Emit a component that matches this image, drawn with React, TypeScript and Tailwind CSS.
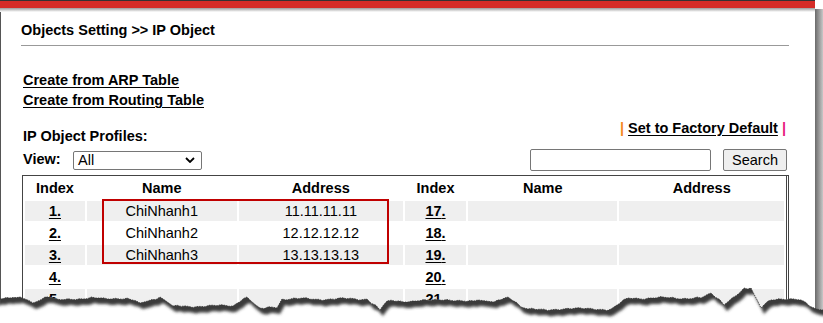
const leftRows = [
  { idx: 1, name: "ChiNhanh1", addr: "11.11.11.11" },
  { idx: 2, name: "ChiNhanh2", addr: "12.12.12.12" },
  { idx: 3, name: "ChiNhanh3", addr: "13.13.13.13" },
  { idx: 4, name: "", addr: "" },
  { idx: 5, name: "", addr: "" },
];

// rough outline of the torn bottom edge
const edgePoints: [number, number][] = [
  [-5, 300], [10, 298], [20, 297], [33, 303], [45, 297], [50, 297], [57, 299], [83, 299],
  [100, 298], [127, 298], [140, 303], [160, 297], [173, 306], [233, 306], [247, 297],
  [260, 308], [277, 308], [282, 299], [367, 299], [380, 310], [387, 301], [412, 301],
  [478, 300], [494, 302], [508, 297], [521, 307], [528, 309], [611, 309], [628, 298],
  [701, 298], [711, 293], [724, 305], [744, 288], [751, 288], [761, 308], [771, 300],
  [801, 300], [814, 308], [830, 310],
];

function roughen(pts: [number, number][]) {
  const out: [number, number][] = [];
  for (let i = 0; i < pts.length - 1; i++) {
    const [x1, y1] = pts[i];
    const [x2, y2] = pts[i + 1];
    const steps = Math.max(1, Math.round((x2 - x1) / 4));
    for (let s = 0; s < steps; s++) {
      const t = s / steps;
      const x = x1 + (x2 - x1) * t;
      const jitter = s === 0 ? 0 : Math.sin(x * 1.7) * 0.9 + Math.sin(x * 0.53) * 0.6;
      out.push([x, y1 + (y2 - y1) * t + jitter]);
    }
  }
  out.push(pts[pts.length - 1]);
  return out;
}

const edge = roughen(edgePoints);
const lineD = "M" + edge.map(([x, y]) => `${x.toFixed(1)},${y.toFixed(1)}`).join(" L");
const belowD = lineD + " L830,330 L-5,330 Z";
const shadowD =
  "M-5,-10 L" +
  edge.map(([x, y]) => `${(x + 3).toFixed(1)},${(y + 6).toFixed(1)}`).join(" L") +
  " L830,-10 Z";

function TornEdge() {
  return (
    <svg className="absolute left-0 top-0 pointer-events-none" width="823" height="323">
      <defs>
        <clipPath id="below">
          <path d={belowD} />
        </clipPath>
        <filter id="blur" x="-10%" y="-10%" width="120%" height="130%">
          <feGaussianBlur stdDeviation="1.8" />
        </filter>
      </defs>
      <path d={belowD} fill="#fff" />
      <g clipPath="url(#below)">
        <path d={shadowD} fill="#3a3a3a" filter="url(#blur)" />
      </g>
      <path d={lineD} fill="none" stroke="#333" strokeWidth="0.8" strokeDasharray="1.5 1" />
    </svg>
  );
}

function Cell({ children, gray }: { children?: React.ReactNode; gray: boolean }) {
  return (
    <td className={`h-[20px] p-0 text-center leading-[20px] ${gray ? "bg-[#efefef]" : "bg-white"}`}>
      {children}
    </td>
  );
}

export default function App() {
  return (
    <div className="relative w-[823px] h-[323px] bg-white overflow-hidden font-['Liberation_Sans',Arial,sans-serif] text-[14.5px] text-black">
      <div className="flex">
        <div className="w-[815px] h-[323px] flex flex-col">
          <div className="h-px bg-[#333]" />
          <div className="h-[7px] bg-[#d52c27]" />
          <div className="h-[4px] bg-gradient-to-b from-[#9c9c9c] to-white" />
          <div className="flex-1 border-l border-[#555] pl-[20px] pr-[26px]">
            <div className="pt-[10px] pb-[6px] leading-[17px] font-bold border-b border-[#999]">
              Objects Setting &gt;&gt; IP Object
            </div>

            <div className="mt-[24px] ml-[2px] flex flex-col items-start font-bold leading-[20px]">
              <a className="underline underline-offset-2">Create from ARP Table</a>
              <a className="underline underline-offset-2">Create from Routing Table</a>
            </div>

            <div className="mt-[10px] h-[24px] flex justify-between">
              <div className="self-end ml-[2px] font-bold leading-[16px]">IP Object Profiles:</div>
              <div className="self-start mr-[3px] font-bold leading-[16px]">
                <span className="text-[#f5881f]">|</span>{" "}
                <a className="underline underline-offset-2">Set to Factory Default</a>{" "}
                <span className="text-[#e8177d]">|</span>
              </div>
            </div>

            <div className="mt-[5px] h-[22px] flex items-center justify-between">
              <div className="flex items-center ml-[2px]">
                <span className="w-[50px] font-bold">View:</span>
                <div className="w-[129px] h-[19px] border border-[#767676] rounded-[2px] flex items-center justify-between pl-[4px] pr-[6px] leading-none">
                  <span>All</span>
                  <svg width="10" height="6" viewBox="0 0 10 6">
                    <polyline points="1,1 5,5 9,1" fill="none" stroke="#000" strokeWidth="1.8" />
                  </svg>
                </div>
              </div>
              <div className="flex items-center gap-[12px] mr-[2px]">
                <div className="w-[181px] h-[22px] border border-[#767676] rounded-[2px] bg-white" />
                <button className="w-[64px] h-[22px] border border-[#767676] rounded-[2px] bg-[#efefef] leading-none">
                  Search
                </button>
              </div>
            </div>

            <table className="mt-[4px] ml-[1px] table-fixed border-separate border-spacing-[2px] border-t border-l border-r-[3px] border-b-0 border-double border-[#444]">
              <thead>
                <tr className="font-bold leading-[21px]">
                  <th className="w-[60px] h-[21px] p-0">Index</th>
                  <th className="w-[150px] h-[21px] p-0">Name</th>
                  <th className="w-[165px] h-[21px] p-0">Address</th>
                  <th className="w-[61px] h-[21px] p-0">Index</th>
                  <th className="w-[150px] h-[21px] p-0">Name</th>
                  <th className="w-[165px] h-[21px] p-0">Address</th>
                </tr>
              </thead>
              <tbody>
                {leftRows.map((r, i) => {
                  const gray = i % 2 === 0;
                  return (
                    <tr key={r.idx}>
                      <Cell gray={gray}>
                        <a className="font-bold underline underline-offset-2">{r.idx}.</a>
                      </Cell>
                      <Cell gray={gray}>{r.name}</Cell>
                      <Cell gray={gray}>{r.addr}</Cell>
                      <Cell gray={gray}>
                        <a className="font-bold underline underline-offset-2">{r.idx + 16}.</a>
                      </Cell>
                      <Cell gray={gray} />
                      <Cell gray={gray} />
                    </tr>
                  );
                })}
              </tbody>
            </table>
          </div>
        </div>
        <div className="mt-[9px] w-[8px] h-[314px] bg-gradient-to-r from-[#6a6a6a] to-[#c8c8c8]" />
      </div>

      <div className="absolute left-[102px] top-[199px] w-[287px] h-[65px] border-2 border-[#c00000]" />

      <TornEdge />
    </div>
  );
}
